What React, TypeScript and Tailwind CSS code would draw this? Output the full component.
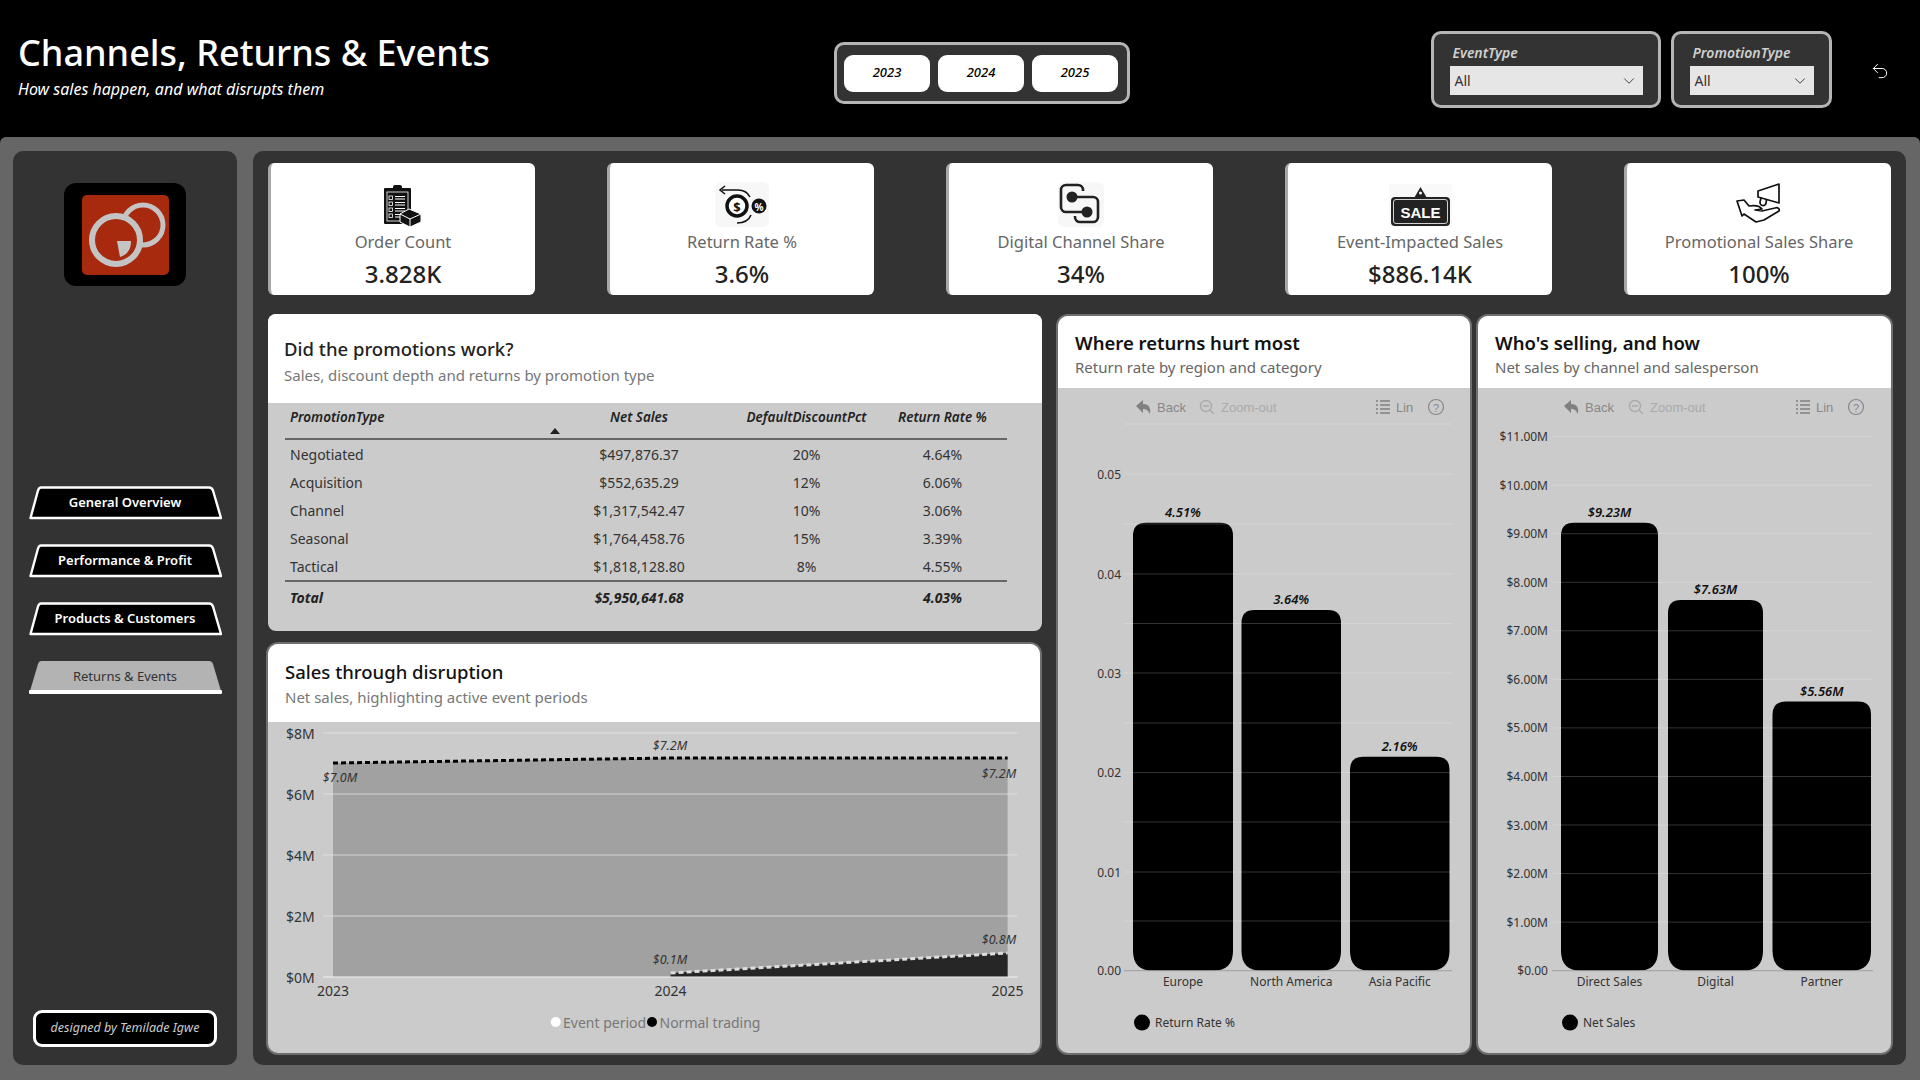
import { ChevronDown, Undo2 } from "lucide-react";

const kpis = [
  { label: "Order Count", value: "3.828K", icon: <ClipboardIcon /> },
  { label: "Return Rate %", value: "3.6%", icon: <ReturnIcon /> },
  { label: "Digital Channel Share", value: "34%", icon: <DigitalIcon /> },
  { label: "Event-Impacted Sales", value: "$886.14K", icon: <SaleIcon /> },
  { label: "Promotional Sales Share", value: "100%", icon: <PromoIcon /> },
];

const navItems = ["General Overview", "Performance & Profit", "Products & Customers", "Returns & Events"];

const promoRows = [
  ["Negotiated", "$497,876.37", "20%", "4.64%"],
  ["Acquisition", "$552,635.29", "12%", "6.06%"],
  ["Channel", "$1,317,542.47", "10%", "3.06%"],
  ["Seasonal", "$1,764,458.76", "15%", "3.39%"],
  ["Tactical", "$1,818,128.80", "8%", "4.55%"],
];

function ClipboardIcon() {
  return (
    <svg width="38" height="42" viewBox="0 0 38 42">
      <rect x="0" y="3" width="27" height="36" rx="1" fill="#111" />
      <rect x="9" y="0" width="9" height="6" rx="2" fill="#111" />
      <rect x="3" y="7" width="21" height="29" fill="none" stroke="#fff" strokeWidth="0.8" />
      {[11, 17, 23, 29].map((y) => (
        <g key={y}>
          <rect x="5" y={y} width="3.5" height="3.5" fill="none" stroke="#fff" strokeWidth="0.8" />
          <path d={`M11 ${y + 0.5}h10M11 ${y + 3}h10`} stroke="#fff" strokeWidth="1" />
        </g>
      ))}
      <path d="M25 24l12 5v8l-11 5-10-5v-8z" fill="#111" stroke="#fff" strokeWidth="1" />
      <path d="M16 29l10 5 11-5M26 34v8" fill="none" stroke="#fff" strokeWidth="1" />
    </svg>
  );
}

function ReturnIcon() {
  return (
    <svg width="54" height="45" viewBox="0 0 54 45" className="rounded-md bg-[#f7f7f7]">
      <path d="M7 8h16c6 0 10 3 12 7" fill="none" stroke="#111" strokeWidth="1.6" />
      <path d="M10 4L5 8l5 4" fill="none" stroke="#111" strokeWidth="1.6" />
      <circle cx="22" cy="24" r="10" fill="#fff" stroke="#111" strokeWidth="3.5" />
      <text x="22" y="24.5" textAnchor="middle" dominantBaseline="central" fontSize="13" fontWeight="700" fill="#111">$</text>
      <circle cx="44" cy="24" r="7.5" fill="#111" />
      <text x="44" y="24.5" textAnchor="middle" dominantBaseline="central" fontSize="10" fontWeight="700" fill="#fff">%</text>
      <path d="M36 33c-2 5-6 8-14 8" fill="none" stroke="#111" strokeWidth="1.6" />
    </svg>
  );
}

function DigitalIcon() {
  return (
    <svg width="46" height="45" viewBox="0 0 46 45" className="rounded-md bg-[#f7f7f7]">
      <path d="M14 15H35a5 5 0 0 1 5 5V35a5 5 0 0 1-5 5H22a5 5 0 0 1-5-5v-1" fill="none" stroke="#222" strokeWidth="2.6" />
      <path d="M29 30H8a5 5 0 0 1-5-5V8a5 5 0 0 1 5-5H20a5 5 0 0 1 5 5v1" fill="none" stroke="#222" strokeWidth="2.6" />
      <circle cx="14" cy="15" r="5.5" fill="#222" />
      <circle cx="29" cy="30" r="5.5" fill="#222" />
    </svg>
  );
}

function SaleIcon() {
  return (
    <svg width="63" height="43" viewBox="0 0 63 43" className="bg-[#f9f9f9]">
      <path d="M31.5 3l7 12h-14z" fill="#222" />
      <circle cx="31.5" cy="9" r="1.5" fill="#fff" />
      <rect x="2" y="13" width="59" height="29" rx="4" fill="#222" />
      <rect x="4.5" y="15.5" width="54" height="24" rx="2.5" fill="none" stroke="#fff" strokeWidth="0.8" />
      <text x="31.5" y="28" textAnchor="middle" dominantBaseline="central" fontSize="15" fontWeight="700" fill="#fff" fontFamily="'Liberation Sans',sans-serif">SALE</text>
    </svg>
  );
}

function PromoIcon() {
  return (
    <svg width="49" height="44" viewBox="0 0 49 44" fill="none" stroke="#111" strokeWidth="1.7" strokeLinejoin="round" strokeLinecap="round">
      <path d="M44 1v19L23 14V8z" />
      <path d="M26 15l-1 4a3 3 0 0 0 6 1l.5-3" />
      <path d="M2 18l7-1 5 6c6-1 11 0 13 3l-7 1 7 1 13-3c3-1 5 1 4 3l-15 9-8 2-12-8-2 2z" />
    </svg>
  );
}

function NavButton({ label, active }: { label: string; active?: boolean }) {
  return (
    <div className={`relative flex h-[34px] w-[193px] items-center justify-center text-[13px] font-semibold ${active ? "text-[#333]" : "text-white"}`}>
      <svg width="193" height="34" viewBox="0 0 193 34" className="absolute inset-0">
        {active ? (
          <>
            <path d="M12 1H180q3 0 4 3L192 31H1L9 4q1-3 3-3z" fill="#b3b3b3" />
            <rect x="0" y="30" width="193" height="4" rx="1" fill="#fff" />
          </>
        ) : (
          <path d="M12 1.5H180q3 0 4 3L192 32H1.5L9 4.5q1-3 3-3z" fill="#000" stroke="#fff" strokeWidth="2.4" strokeLinejoin="round" />
        )}
      </svg>
      <span className={`relative ${active ? "font-normal" : ""}`}>{label}</span>
    </div>
  );
}

function FilterBox({ label, width, selectWidth }: { label: string; width: string; selectWidth: string }) {
  return (
    <div className={`${width} flex h-[77px] flex-col items-center rounded-[10px] border-[3px] border-[#b5b5b5] bg-[#333]`}>
      <div className={`${selectWidth} pl-[3px] pt-[9px] text-[14px] font-semibold italic leading-[20px] text-[#d0d0d0]`}>{label}</div>
      <div className={`${selectWidth} mt-[3px] flex h-[29px] items-center justify-between bg-[#e6e6e6] pl-[5px] pr-[5px] text-[14px] text-[#333]`}>
        <span>All</span>
        <ChevronDown size={18} strokeWidth={1.2} />
      </div>
    </div>
  );
}

function Toolbar({ backX, zoomX, listX, helpX }: { backX: number; zoomX: number; listX: number; helpX: number }) {
  const y = 407;
  return (
    <g fontFamily="'Liberation Sans',sans-serif" fontSize="13">
      <path transform={`translate(${backX - 7} ${y})`} d="M0 -1L7 -7V-3C13 -3 15 1 14 7C12 3 10 2 7 2V6Z" fill="#808080" />
      <text x={backX + 14} y={y} dominantBaseline="central" fill="#888">Back</text>
      <g transform={`translate(${zoomX} ${y})`} fill="none" stroke="#aaa" strokeWidth="1.4">
        <circle cx="-1" cy="-1" r="5.5" />
        <path d="M-4 -1H2M3 3L7 7" />
      </g>
      <text x={zoomX + 14} y={y} dominantBaseline="central" fill="#aaa">Zoom-out</text>
      <path transform={`translate(${listX - 7} ${y})`} d="M0 -6h2M4 -6h10M0 -2h2M4 -2h10M0 2h2M4 2h10M0 6h2M4 6h10" stroke="#808080" strokeWidth="1.3" />
      <text x={listX + 13} y={y} dominantBaseline="central" fill="#888">Lin</text>
      <circle cx={helpX} cy={y} r="7.5" fill="none" stroke="#888" strokeWidth="1.2" />
      <text x={helpX} y={y + 0.5} textAnchor="middle" dominantBaseline="central" fontSize="11" fill="#888">?</text>
    </g>
  );
}

type Bar = { name: string; x1: number; x2: number; top: number; value: string };

function BarShape({ x1, x2, top }: Bar) {
  const base = 970.7;
  return <path d={`M${x1} ${top + 13}q0 -13 13 -13H${x2 - 13}q13 0 13 13V${base - 20}q0 20 -20 20H${x1 + 20}q-20 0 -20 -20Z`} fill="#000" />;
}

function BarChart({
  offsetX,
  width,
  bars,
  grid,
  ticks,
  gridX1,
  gridX2,
  labelX,
  legend,
  legendX,
  toolbar,
}: {
  offsetX: number;
  width: number;
  bars: Bar[];
  grid: number[];
  ticks: { y: number; label: string }[];
  gridX1: number;
  gridX2: number;
  labelX: number;
  legend: string;
  legendX: number;
  toolbar: { backX: number; zoomX: number; listX: number; helpX: number };
}) {
  return (
    <svg width={width} height="665" viewBox={`${offsetX} 388 ${width} 665`} className="block">
      <Toolbar {...toolbar} />
      {bars.map((b) => (
        <BarShape key={b.name} {...b} />
      ))}
      {grid.map((y) => (
        <line key={y} x1={gridX1} x2={gridX2} y1={y} y2={y} stroke="#fff" strokeOpacity="0.2" />
      ))}
      <line x1={gridX1} x2={gridX2} y1="970.7" y2="970.7" stroke="#a0a0a0" />
      {ticks.map((t) => (
        <text key={t.label} x={labelX} y={t.y} textAnchor="end" dominantBaseline="central" fontSize="12" fill="#333">
          {t.label}
        </text>
      ))}
      {bars.map((b) => (
        <g key={b.name}>
          <text x={(b.x1 + b.x2) / 2} y={b.top - 11} textAnchor="middle" dominantBaseline="central" fontSize="13" fontStyle="italic" fontWeight="600" fill="#111">
            {b.value}
          </text>
          <text x={(b.x1 + b.x2) / 2} y="981.7" textAnchor="middle" dominantBaseline="central" fontSize="12" fill="#333">
            {b.name}
          </text>
        </g>
      ))}
      <circle cx={legendX} cy="1022.6" r="8" fill="#000" />
      <text x={legendX + 13} y="1022.6" dominantBaseline="central" fontSize="12" fill="#333">
        {legend}
      </text>
    </svg>
  );
}

function AreaChart() {
  const gridYs = [733, 794, 855, 916];
  const axis = [
    { y: 733, label: "$8M" },
    { y: 794, label: "$6M" },
    { y: 855, label: "$4M" },
    { y: 916, label: "$2M" },
    { y: 977, label: "$0M" },
  ];
  const labels = [
    { x: 670, y: 745, t: "$7.2M" },
    { x: 340, y: 777, t: "$7.0M" },
    { x: 999, y: 773, t: "$7.2M" },
    { x: 999, y: 939, t: "$0.8M" },
    { x: 670, y: 959, t: "$0.1M" },
  ];
  return (
    <svg width="772" height="331" viewBox="268 722 772 331" className="block">
      <polygon points="333,763 670.6,758 1007.6,758 1007.6,977 333,977" fill="#a1a1a1" />
      <polygon points="670.6,973 1007.6,953 1007.6,977 670.6,977" fill="#262626" />
      {gridYs.map((y) => (
        <line key={y} x1="323" x2="1017.6" y1={y} y2={y} stroke="#e6e6e6" strokeOpacity="0.75" />
      ))}
      <line x1="323" x2="1017.6" y1="977" y2="977" stroke="#f2f2f2" />
      <polyline points="333,763 670.6,758 1007.6,758" fill="none" stroke="#000" strokeWidth="3" strokeDasharray="5 3" />
      <polyline points="670.6,973 1007.6,953" fill="none" stroke="#ddd" strokeWidth="3" strokeDasharray="5 3" />
      {axis.map((a) => (
        <text key={a.label} x="286" y={a.y} dominantBaseline="central" fontSize="14" fill="#333">
          {a.label}
        </text>
      ))}
      {labels.map((l) => (
        <text key={l.x + "-" + l.y} x={l.x} y={l.y} textAnchor="middle" dominantBaseline="central" fontSize="12.5" fontStyle="italic" fill="#333">
          {l.t}
        </text>
      ))}
      {[
        { x: 333, t: "2023" },
        { x: 670.6, t: "2024" },
        { x: 1007.6, t: "2025" },
      ].map((a) => (
        <text key={a.t} x={a.x} y="990" textAnchor="middle" dominantBaseline="central" fontSize="14" fill="#333">
          {a.t}
        </text>
      ))}
      <circle cx="555.7" cy="1022" r="5" fill="#fff" />
      <text x="563" y="1022" dominantBaseline="central" fontSize="14" fill="#777">Event period</text>
      <circle cx="652" cy="1022" r="5" fill="#000" />
      <text x="659.5" y="1022" dominantBaseline="central" fontSize="14" fill="#777">Normal trading</text>
    </svg>
  );
}

function ChartPanel({ title, subtitle, children }: { title: string; subtitle: string; children: React.ReactNode }) {
  return (
    <div className="mt-[2px] h-[737px] overflow-hidden rounded-[10px] bg-[#cbcbcb] ring-2 ring-[#6e6e6e]">
      <div className="h-[72px] bg-white pl-[17px] pt-[14px]">
        <div className="text-[18.5px] font-semibold leading-[26px] text-[#111]">{title}</div>
        <div className="text-[15px] leading-[22px] text-[#666]">{subtitle}</div>
      </div>
      {children}
    </div>
  );
}

export default function App() {
  return (
    <div className="flex h-[1080px] w-[1920px] flex-col overflow-hidden bg-black font-['Noto_Sans',sans-serif]">
      {/* Header */}
      <header className="flex h-[137px] shrink-0 items-start pl-[18px]">
        <div className="w-[816px] pt-[28px]">
          <h1 className="text-[36px] font-medium leading-[50px] text-white">Channels, Returns &amp; Events</h1>
          <p className="mt-[-1px] text-[16px] italic leading-[24px] text-white">How sales happen, and what disrupts them</p>
        </div>
        <div className="mt-[42px] flex h-[62px] w-[296px] items-center gap-[8px] rounded-[10px] border-[3px] border-[#b5b5b5] bg-[#333] pl-[7px]">
          {["2023", "2024", "2025"].map((year) => (
            <div key={year} className="flex h-[37px] w-[86px] items-center justify-center rounded-[9px] bg-white text-[13px] font-medium italic text-black">
              {year}
            </div>
          ))}
        </div>
        <div className="ml-[301px] mt-[31px] flex gap-[10px]">
          <FilterBox label="EventType" width="w-[230px]" selectWidth="w-[193px]" />
          <FilterBox label="PromotionType" width="w-[161px]" selectWidth="w-[124px]" />
        </div>
        <Undo2 size={20} strokeWidth={1.2} className="ml-[38px] mt-[61px] text-white" />
      </header>

      {/* Body */}
      <div className="flex flex-1 gap-[16px] rounded-t-md bg-[#666] pl-[13px] pr-[14px] pt-[14px]">
        {/* Sidebar */}
        <aside className="flex h-[914px] w-[224px] flex-col items-center rounded-[10px] bg-[#333]">
          <div className="mt-[32px] flex h-[103px] w-[122px] items-center justify-center rounded-[12px] bg-black">
            <svg width="87" height="80" viewBox="0 0 87 80" className="rounded-[5px] bg-[#a82a0e]">
              <circle cx="61" cy="30" r="20" fill="none" stroke="#c4c4c4" strokeWidth="5" />
              <circle cx="34" cy="45" r="24" fill="#a82a0e" stroke="#c4c4c4" strokeWidth="6" />
              <path d="M35 46H49C49 56 44 60 38 62Z" fill="#c4c4c4" />
            </svg>
          </div>
          <nav className="mt-[200px] flex flex-col gap-[24px]">
            {navItems.map((item, i) => (
              <NavButton key={item} label={item} active={i === 3} />
            ))}
          </nav>
          <div className="mb-[18px] mt-auto flex h-[37px] w-[184px] items-center justify-center rounded-[9px] border-[3px] border-white bg-black text-[12.5px] italic text-[#ccc]">
            designed by Temilade Igwe
          </div>
        </aside>

        {/* Main */}
        <main className="h-[914px] flex-1 rounded-[10px] bg-[#333] px-[15px] pt-[12px]">
          <div className="flex justify-between">
            {kpis.map((kpi) => (
              <div key={kpi.label} className="flex h-[132px] w-[267px] flex-col items-center rounded-[6px] border-l-[3px] border-[#a8a8a8] bg-white">
                <div className="flex h-[64px] items-end">{kpi.icon}</div>
                <div className="mt-[3px] text-[16.5px] leading-[24px] text-[#666]">{kpi.label}</div>
                <div className="mt-[4px] text-[24px] font-medium leading-[32px] text-[#222]">{kpi.value}</div>
              </div>
            ))}
          </div>

          <div className="mt-[19px] flex items-start">
            <div className="flex w-[774px] flex-col gap-[13px]">
              {/* Promotions table */}
              <section className="h-[317px] overflow-hidden rounded-[8px] bg-[#cbcbcb]">
                <div className="h-[89px] bg-white pl-[16px] pt-[20px]">
                  <h2 className="text-[18.5px] font-medium leading-[30px] text-[#222]">Did the promotions work?</h2>
                  <p className="text-[15px] leading-[22px] text-[#777]">Sales, discount depth and returns by promotion type</p>
                </div>
                <div className="ml-[17px] w-[722px] text-[14px] text-[#333]">
                  <div className="relative grid h-[37px] grid-cols-[271px_166px_169px_103px] border-b-2 border-[#666] pt-[3px] text-[13.5px] font-semibold italic leading-[22px] text-[#222]">
                    <div className="pl-[5px]">PromotionType</div>
                    <div className="text-center">Net Sales</div>
                    <div className="text-center">DefaultDiscountPct</div>
                    <div className="text-center">Return Rate %</div>
                    <div className="absolute left-[265px] top-[25px] h-0 w-0 border-x-[5px] border-b-[6px] border-x-transparent border-b-[#222]" />
                  </div>
                  {promoRows.map((row) => (
                    <div key={row[0]} className="grid h-[28px] grid-cols-[271px_166px_169px_103px] items-center">
                      <div className="pl-[5px]">{row[0]}</div>
                      <div className="text-center">{row[1]}</div>
                      <div className="text-center">{row[2]}</div>
                      <div className="text-center">{row[3]}</div>
                    </div>
                  ))}
                  <div className="grid h-[32px] grid-cols-[271px_166px_169px_103px] items-center border-t-2 border-[#666] font-bold italic text-[#222]">
                    <div className="pl-[5px]">Total</div>
                    <div className="text-center">$5,950,641.68</div>
                    <div />
                    <div className="text-center">4.03%</div>
                  </div>
                </div>
              </section>

              {/* Sales through disruption */}
              <section className="h-[409px] w-[772px] overflow-hidden rounded-[10px] bg-[#cbcbcb] ring-2 ring-[#6e6e6e]">
                <div className="h-[78px] bg-white pl-[17px] pt-[14px]">
                  <h2 className="text-[18.5px] font-medium leading-[28px] text-[#111]">Sales through disruption</h2>
                  <p className="text-[15px] leading-[22px] text-[#777]">Net sales, highlighting active event periods</p>
                </div>
                <AreaChart />
              </section>
            </div>

            <div className="ml-[16px] w-[412px]">
              <ChartPanel title="Where returns hurt most" subtitle="Return rate by region and category">
                <BarChart
                  offsetX={1058}
                  width={412}
                  gridX1={1124}
                  gridX2={1452}
                  labelX={1121}
                  grid={[424, 474, 524, 574, 623.5, 673, 723, 772.6, 822, 872, 921]}
                  ticks={[
                    { y: 474, label: "0.05" },
                    { y: 574, label: "0.04" },
                    { y: 673, label: "0.03" },
                    { y: 772.6, label: "0.02" },
                    { y: 872, label: "0.01" },
                    { y: 970.7, label: "0.00" },
                  ]}
                  bars={[
                    { name: "Europe", x1: 1133, x2: 1233, top: 522.7, value: "4.51%" },
                    { name: "North America", x1: 1241.5, x2: 1341, top: 610, value: "3.64%" },
                    { name: "Asia Pacific", x1: 1350, x2: 1449.5, top: 756.7, value: "2.16%" },
                  ]}
                  legend="Return Rate %"
                  legendX={1142}
                  toolbar={{ backX: 1143, zoomX: 1207, listX: 1383, helpX: 1436 }}
                />
              </ChartPanel>
            </div>

            <div className="ml-[8px] w-[413px]">
              <ChartPanel title="Who's selling, and how" subtitle="Net sales by channel and salesperson">
                <BarChart
                  offsetX={1478}
                  width={413}
                  gridX1={1552}
                  gridX2={1873}
                  labelX={1548}
                  grid={[436.6, 485.2, 533.7, 582.3, 630.8, 679.4, 727.9, 776.5, 825, 873.6, 922.1]}
                  ticks={[
                    { y: 436.6, label: "$11.00M" },
                    { y: 485.2, label: "$10.00M" },
                    { y: 533.7, label: "$9.00M" },
                    { y: 582.3, label: "$8.00M" },
                    { y: 630.8, label: "$7.00M" },
                    { y: 679.4, label: "$6.00M" },
                    { y: 727.9, label: "$5.00M" },
                    { y: 776.5, label: "$4.00M" },
                    { y: 825, label: "$3.00M" },
                    { y: 873.6, label: "$2.00M" },
                    { y: 922.1, label: "$1.00M" },
                    { y: 970.7, label: "$0.00" },
                  ]}
                  bars={[
                    { name: "Direct Sales", x1: 1561, x2: 1658, top: 522.7, value: "$9.23M" },
                    { name: "Digital", x1: 1668, x2: 1763, top: 600, value: "$7.63M" },
                    { name: "Partner", x1: 1772.5, x2: 1871, top: 701.6, value: "$5.56M" },
                  ]}
                  legend="Net Sales"
                  legendX={1570}
                  toolbar={{ backX: 1571, zoomX: 1636, listX: 1803, helpX: 1856 }}
                />
              </ChartPanel>
            </div>
          </div>
        </main>
      </div>
    </div>
  );
}
